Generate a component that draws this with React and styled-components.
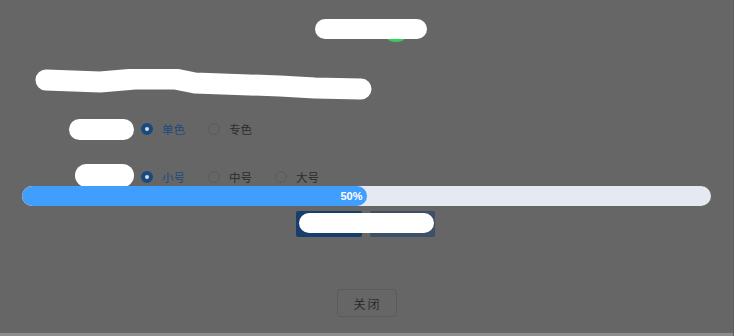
import React from 'react';
import styled, { createGlobalStyle } from 'styled-components';

const GlobalStyle = createGlobalStyle`
  html, body {
    margin: 0;
    padding: 0;
    background: #666666;
  }
`;

const Page = styled.div`
  height: 336px;
  box-sizing: border-box;
  display: flex;
  flex-direction: column;
  background: #666666;
  border-right: 1px solid #5e5e5e;
  font-family: 'Noto Sans CJK SC', 'Noto Sans', sans-serif;
  overflow: hidden;
`;

const TitleRow = styled.div`
  display: flex;
  justify-content: center;
  margin-top: 19px;
  padding-left: 8px;
`;

const Mark = styled.span`
  position: relative;
  display: block;
  width: ${({ w }) => w}px;
  height: ${({ h }) => h}px;
  border-radius: ${({ h }) => h / 2}px;
  background: #ffffff;
`;

const GreenTip = styled.span`
  position: absolute;
  left: 72px;
  bottom: -3px;
  width: 18px;
  height: 8px;
  border-radius: 50%;
  background: #2fd15a;
  z-index: -1;
`;

const TitleWrap = styled.div`
  position: relative;
  z-index: 0;
`;

const Scribble = styled.svg`
  display: block;
  margin: 30px 0 0 35px;
`;

const FormRow = styled.div`
  display: flex;
  align-items: center;
  height: 22px;
  margin-top: ${({ top }) => top}px;
`;

const Label = styled.div`
  width: 134px;
  display: flex;
  justify-content: flex-end;
  padding-right: 7px;
  box-sizing: content-box;
  margin-top: ${({ shift }) => shift || 0}px;
`;

const RadioGroup = styled.div`
  display: flex;
  align-items: center;
  gap: 22px;
`;

const Option = styled.label`
  display: flex;
  align-items: center;
  gap: 9px;
  font-size: 11.5px;
  line-height: 22px;
  color: ${({ checked }) => (checked ? '#1d4a7c' : '#2a2b2e')};
  min-width: 45px;
`;

const Dot = styled.span`
  width: 12px;
  height: 12px;
  box-sizing: border-box;
  border-radius: 50%;
  border: ${({ checked }) => (checked ? '4px solid #184a80' : '1px solid #5a5b5e')};
  background: ${({ checked }) => (checked ? '#d8dde4' : 'transparent')};
`;

const Progress = styled.div`
  position: relative;
  margin: -2px 22px 0;
  height: 20px;
  border-radius: 10px;
  background: #e5e9f2;
  overflow: hidden;
`;

const Bar = styled.div`
  height: 100%;
  border-radius: 10px;
  background: #409eff;
  color: #ffffff;
  font-family: 'Liberation Sans', Arial, sans-serif;
  font-size: 11px;
  font-weight: bold;
  line-height: 20px;
  text-align: right;
  padding-right: 4px;
  box-sizing: border-box;
`;

const ButtonRow = styled.div`
  display: flex;
  justify-content: center;
  margin-top: 5px;
  padding-right: 3px;
`;

const ButtonBox = styled.div`
  position: relative;
  display: flex;
  gap: 8px;
`;

const Button = styled.button`
  width: ${({ w }) => w}px;
  height: 26px;
  border: none;
  border-radius: 2px;
  background: ${({ disabled }) => (disabled ? '#3d5068' : '#163f6b')};
  padding: 0;
`;

const Cover = styled.span`
  position: absolute;
  left: 3px;
  top: 2px;
  width: 135px;
  height: 20px;
  border-radius: 10px;
  background: #ffffff;
`;

const CloseRow = styled.div`
  display: flex;
  justify-content: center;
  margin-top: 52px;
`;

const CloseButton = styled.button`
  width: 60px;
  height: 28px;
  border: 1px solid #5a5b5e;
  border-radius: 3px;
  background: transparent;
  color: #2a2b2e;
  font-family: 'Noto Sans CJK SC', sans-serif;
  font-size: 12px;
  letter-spacing: 2px;
  padding: 0 0 0 2px;
`;

const Footer = styled.div`
  margin-top: auto;
  height: 3px;
  background: #8c8c8c;
`;

const colorOptions = [
  { label: '单色', checked: true },
  { label: '专色' },
];

const sizeOptions = [
  { label: '小号', checked: true },
  { label: '中号' },
  { label: '大号' },
];

const Radios = ({ options }) => (
  <RadioGroup>
    {options.map((o) => (
      <Option key={o.label} checked={o.checked}>
        <Dot checked={o.checked} />
        {o.label}
      </Option>
    ))}
  </RadioGroup>
);

const App = () => {
  const percent = 50;
  return (
    <Page>
      <GlobalStyle />
      <TitleRow>
        <TitleWrap>
          <GreenTip />
          <Mark w={112} h={20} />
        </TitleWrap>
      </TitleRow>

      <Scribble width="338" height="32" viewBox="0 0 338 32">
        <path
          d="M11 11 L65 13 L100 10 L140 10 L160 14 L245 17 L280 19 L326 20"
          fill="none"
          stroke="#ffffff"
          strokeWidth="21"
          strokeLinecap="round"
          strokeLinejoin="round"
        />
      </Scribble>

      <FormRow top={17}>
        <Label>
          <Mark w={65} h={21} />
        </Label>
        <Radios options={colorOptions} />
      </FormRow>

      <FormRow top={26}>
        <Label shift={-3}>
          <Mark w={59} h={23} />
        </Label>
        <Radios options={sizeOptions} />
      </FormRow>

      <Progress>
        <Bar style={{ width: `${percent}%` }}>{percent}%</Bar>
      </Progress>

      <ButtonRow>
        <ButtonBox>
          <Button w={66} />
          <Button w={65} disabled />
          <Cover />
        </ButtonBox>
      </ButtonRow>

      <CloseRow>
        <CloseButton>关闭</CloseButton>
      </CloseRow>

      <Footer />
    </Page>
  );
};

export default App;
